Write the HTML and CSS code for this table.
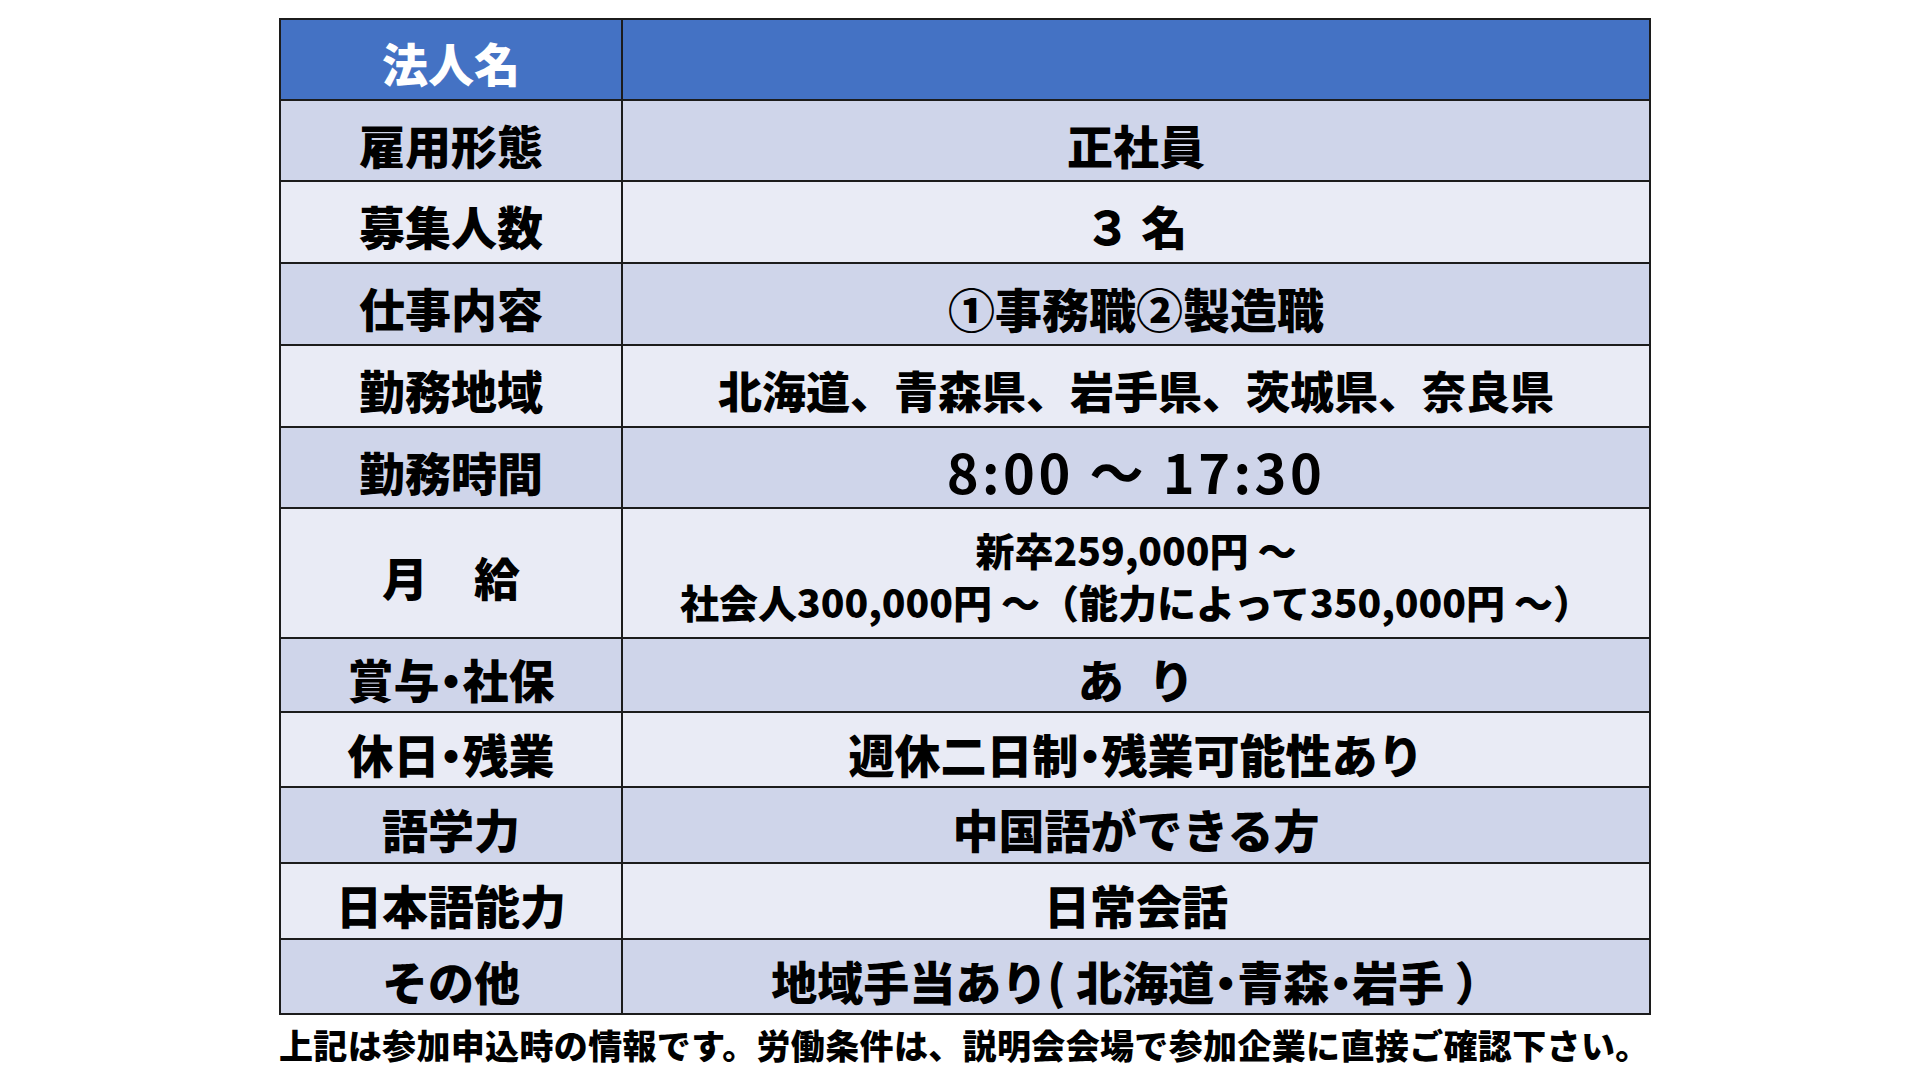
FILE: index.html
```html
<!DOCTYPE html>
<html lang="ja">
<head>
<meta charset="utf-8">
<title>求人情報</title>
<link rel="stylesheet" href="styles.css">
</head>
<body>
<main class="sheet">
  <div class="grid">
    <div class="cell head">法人名</div>
    <div class="cell head"></div>

    <div class="cell dark">雇用形態</div>
    <div class="cell dark">正社員</div>

    <div class="cell light">募集人数</div>
    <div class="cell light">３ 名</div>

    <div class="cell dark">仕事内容</div>
    <div class="cell dark wide">①事務職②製造職</div>

    <div class="cell light">勤務地域</div>
    <div class="cell light region">北海道、青森県、岩手県、茨城県、奈良県</div>

    <div class="cell dark">勤務時間</div>
    <div class="cell dark time">8:00 ～ 17:30</div>

    <div class="cell light">月　給</div>
    <div class="cell light salary">新卒259,000円 ～<br>社会人300,000円 ～（能力によって350,000円 ～）</div>

    <div class="cell dark">賞与<span class="dot">・</span>社保</div>
    <div class="cell dark ari">あ り</div>

    <div class="cell light">休日<span class="dot">・</span>残業</div>
    <div class="cell light">週休二日制<span class="dot">・</span>残業可能性あり</div>

    <div class="cell dark">語学力</div>
    <div class="cell dark">中国語ができる方</div>

    <div class="cell light">日本語能力</div>
    <div class="cell light">日常会話</div>

    <div class="cell dark">その他</div>
    <div class="cell dark">地域手当あり( 北海道<span class="dot">・</span>青森<span class="dot">・</span>岩手 ）</div>
  </div>
  <p class="note">上記は参加申込時の情報です。労働条件は、説明会会場で参加企業に直接ご確認下さい。</p>
</main>
</body>
</html>
```

FILE: styles.css
```css
html, body {
  margin: 0;
  padding: 0;
  background: #ffffff;
}

body {
  font-family: "Noto Sans CJK JP", "Noto Sans", sans-serif;
  font-weight: 900;
  color: #000000;
}

.sheet {
  width: 1372px;
  padding: 18px 0 0 279px;
}

.grid {
  display: grid;
  grid-template-columns: 340px 1026px;
  grid-template-rows: 79px 79px 80px 80px 80px 79px 128px 72px 73px 74px 74px 73px;
  gap: 2px;
  padding: 2px;
  background: #1c1c1c;
}

.cell {
  display: flex;
  align-items: center;
  justify-content: center;
  padding-top: 8px;
  box-sizing: border-box;
  font-size: 46px;
  line-height: 1.2;
  white-space: nowrap;
}

.head {
  background: #4472c4;
  color: #ffffff;
  padding-top: 6px;
}

.dark {
  background: #cfd5ea;
}

.light {
  background: #e9ebf5;
}

.wide {
  font-size: 47px;
}

.region {
  font-size: 44px;
}

.time {
  font-size: 54px;
  font-weight: 700;
  letter-spacing: 3.5px;
}

.salary {
  font-size: 39px;
  line-height: 52px;
  text-align: center;
  padding-top: 4px;
}

.ari {
  word-spacing: 14px;
}

.dot {
  font-feature-settings: "halt" 1;
}

.note {
  margin: 10px 0 0 0;
  font-size: 34px;
  line-height: 40px;
  letter-spacing: 0.35px;
  white-space: nowrap;
}
```
